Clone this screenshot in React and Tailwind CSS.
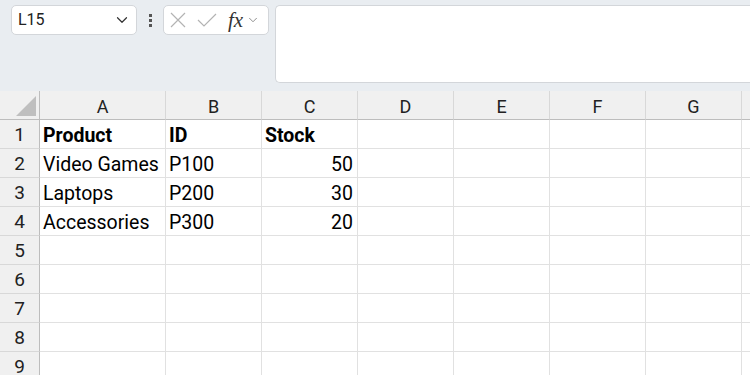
import { ChevronDown } from "lucide-react";

const cols = ["A", "B", "C", "D", "E", "F", "G", "H"];

const data = {
  1: [{ t: "Product", b: true }, { t: "ID", b: true }, { t: "Stock", b: true }],
  2: [{ t: "Video Games" }, { t: "P100" }, { t: "50", r: true }],
  3: [{ t: "Laptops" }, { t: "P200" }, { t: "30", r: true }],
  4: [{ t: "Accessories" }, { t: "P300" }, { t: "20", r: true }],
};

function TopBar() {
  return (
    <div className="h-[91px] bg-[#e9edf1] flex items-start pt-[5px]">
      {/* name box */}
      <div className="ml-[11px] w-[126px] h-[30px] bg-white border border-[#d3d6da] rounded-[5px] flex items-center pl-[6px] pr-[5px]">
        <span className="text-[16px] text-[#222] flex-1">L15</span>
        <ChevronDown size={18} strokeWidth={1.6} className="text-[#333]" />
      </div>
      {/* dots */}
      <div className="w-[26px] h-[30px] flex flex-col items-center justify-center gap-[2px]">
        <div className="w-[3px] h-[3px] bg-[#555]"></div>
        <div className="w-[3px] h-[3px] bg-[#555]"></div>
        <div className="w-[3px] h-[3px] bg-[#555]"></div>
      </div>
      {/* fx box */}
      <div className="w-[106px] h-[30px] bg-white border border-[#d3d6da] rounded-[5px] flex items-center pl-[6px]">
        <svg width="16" height="16" viewBox="0 0 16 16" className="text-[#b3b3b3]">
          <path d="M1 1 L15 15 M15 1 L1 15" stroke="currentColor" strokeWidth="1.2" fill="none" />
        </svg>
        <svg width="20" height="14" viewBox="0 0 20 14" className="ml-[11px] text-[#b3b3b3]">
          <path d="M1 7 L7 13 L19 1" stroke="currentColor" strokeWidth="1.2" fill="none" />
        </svg>
        <span className="ml-[11px] text-[21px] italic font-['Liberation_Serif',serif] text-[#333] leading-none">fx</span>
        <ChevronDown size={14} strokeWidth={1.4} className="text-[#777] ml-[3px]" />
      </div>
      {/* formula bar */}
      <div className="ml-[6px] flex-1 h-[78px] bg-white border border-[#d3d6da] border-r-0 rounded-l-[5px]"></div>
    </div>
  );
}

export default function App() {
  const rows = [1, 2, 3, 4, 5, 6, 7, 8, 9];
  return (
    <div className="w-[750px] h-[375px] overflow-hidden bg-white font-['Roboto',sans-serif]">
      <TopBar />
      <div className="grid grid-cols-[40px_126px_96px_96px_96px_96px_96px_96px_96px] auto-rows-[29px]">
        {/* corner */}
        <div className="bg-[#f0f0f0] border-r border-b border-[#bdbdbd] flex items-end justify-end pr-[3px] pb-[3px]">
          <div className="w-0 h-0 border-l-[20px] border-l-transparent border-b-[20px] border-b-[#bfbfbf]"></div>
        </div>
        {cols.map((c) => (
          <div
            key={c}
            className="bg-[#f0f0f0] border-r border-b border-r-[#d8d8d8] border-b-[#bdbdbd] flex items-center justify-center pt-[2px] text-[18px] text-[#222]"
          >
            {c === "H" ? "" : c}
          </div>
        ))}
        {rows.map((r) => (
          <div key={r} className="contents">
            <div className="bg-[#f0f0f0] border-r border-b border-r-[#bdbdbd] border-b-[#d8d8d8] flex items-center justify-center pt-[2px] text-[19px] text-[#222]">
              {r}
            </div>
            {cols.map((c, i) => {
              const cell = data[r] && data[r][i];
              return (
                <div
                  key={c}
                  className={`border-r border-b border-[#e1e1e1] flex items-center pt-[3px] text-[19.5px] text-black whitespace-nowrap overflow-hidden ${
                    cell && cell.r ? "justify-end pr-[4px]" : "pl-[3px]"
                  } ${cell && cell.b ? "font-bold" : ""}`}
                >
                  {cell ? cell.t : ""}
                </div>
              );
            })}
          </div>
        ))}
      </div>
    </div>
  );
}
